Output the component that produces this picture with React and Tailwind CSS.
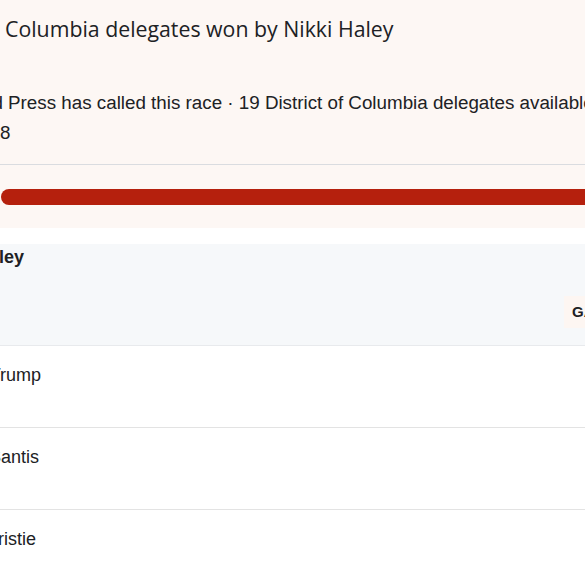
export default function App() {
  const rows = [
    { name: "Donald Trump" },
    { name: "Ron DeSantis" },
    { name: "Chris Christie" },
  ];
  return (
    <div className="w-[585px] h-[585px] overflow-hidden bg-white text-[#202124]" style={{ fontFamily: '"Liberation Sans", Arial, sans-serif' }}>
      <section className="h-[228px] bg-[#fdf7f4] flex flex-col">
        <h1 className="pt-[15px] pl-[5px] text-[21.3px] leading-[28px] font-medium whitespace-nowrap text-[#202124]" style={{ fontFamily: '"Open Sans", Roboto, sans-serif' }}>
          Columbia delegates won by Nikki Haley
        </h1>
        <div className="mt-[45px] text-[18.8px] leading-[30px] whitespace-nowrap text-[#202124]">
          <p className="ml-[-89px]">Associated Press has called this race · 19 District of Columbia delegates available</p>
          <p>8</p>
        </div>
        <div className="mt-[16px] h-px bg-[#dadce0]" />
        <div className="mt-[24px] ml-[1px] h-[16px] rounded-l-full bg-[#b5200d]" />
      </section>
      <div className="h-[16px]" />
      <div className="h-[102px] bg-[#f6f8fa] border-b border-[#e8eaed] flex flex-col">
        <div className="ml-[-72px] pt-[1px] text-[18px] leading-[24px] font-bold whitespace-nowrap">Nikki Haley</div>
        <div className="flex justify-end mt-[27px]">
          <div className="w-[21px] h-[32px] bg-[#fdf6f2] pl-[8px] flex items-center text-[15px] font-bold overflow-hidden whitespace-nowrap">GAIN</div>
        </div>
      </div>
      {rows.map((r, i) => (
        <div key={i} className="h-[82px] border-b border-[#e3e3e3] pt-[17px]">
          <div className="ml-[-72px] text-[18px] leading-[24px] whitespace-nowrap">{r.name}</div>
        </div>
      ))}
    </div>
  );
}
